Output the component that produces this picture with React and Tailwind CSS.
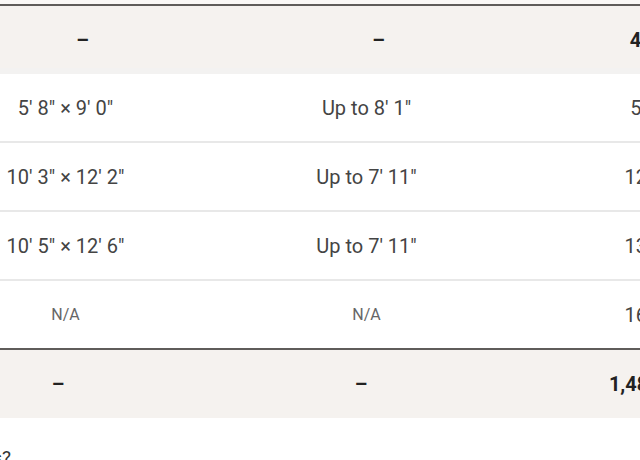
const rows = [
  { size: '5\' 8" × 9\' 0"', height: 'Up to 8\' 1"', area: '55 sq ft' },
  { size: '10\' 3" × 12\' 2"', height: 'Up to 7\' 11"', area: '125 sq ft' },
  { size: '10\' 5" × 12\' 6"', height: 'Up to 7\' 11"', area: '130 sq ft' },
];

function BodyRow({ children, last }) {
  return (
    <div
      className={`grid grid-cols-3 h-[69px] items-center text-center bg-white ${
        last ? 'border-b-2 border-[#5f5c5a]' : 'border-b-2 border-[#e8e8e8]'
      }`}
    >
      {children}
    </div>
  );
}

export default function App() {
  return (
    <div className="w-[640px] h-[460px] overflow-hidden bg-white font-['Roboto',sans-serif]">
      <div className="h-[4px] bg-[#faf8f6]" />
      <div className="ml-[-85px] w-[903px]">
        {/* Header row */}
        <div className="grid grid-cols-3 h-[70px] items-center text-center bg-[#f5f2ef] border-t-2 border-[#5f5c5a] border-b-[6px] border-b-[#f3f2f1] text-[20px] font-bold text-[#222]">
          <div className="pl-[34px] pt-[6px]">–</div>
          <div className="pl-[24px] pt-[6px]">–</div>
          <div className="pr-[7px] pt-[6px]">46 sq ft</div>
        </div>

        {rows.map((r) => (
          <BodyRow key={r.size}>
            <div className="text-[20px] text-[#444]">{r.size}</div>
            <div className="text-[20px] text-[#444]">{r.height}</div>
            <div className="pr-[7px] text-[20px] text-[#444]">{r.area}</div>
          </BodyRow>
        ))}

        <BodyRow last>
          <div className="text-[16px] text-[#666]">N/A</div>
          <div className="text-[16px] text-[#666]">N/A</div>
          <div className="pr-[7px] text-[20px] text-[#444]">165 sq ft</div>
        </BodyRow>

        {/* Footer / total row */}
        <div className="grid grid-cols-3 h-[68px] items-center text-center bg-[#f5f2ef] text-[20px] font-bold text-[#222]">
          <div className="pr-[15px]">–</div>
          <div className="pr-[11px]">–</div>
          <div className="pr-[21px]">1,485 sq ft</div>
        </div>
      </div>

      <div className="ml-[-240px] w-[251px] mt-[26px] text-right text-[19px] text-[#333]">
        What are the room sizes?
      </div>
    </div>
  );
}
